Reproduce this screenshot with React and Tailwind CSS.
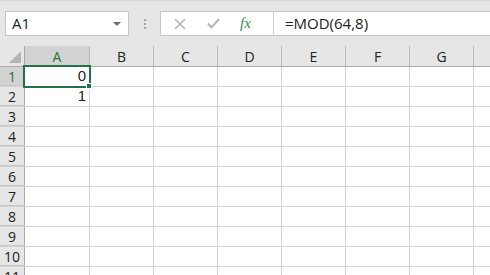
import React from "react";

const cols = ["A", "B", "C", "D", "E", "F", "G", ""];
const rows = [1, 2, 3, 4, 5, 6, 7, 8, 9, 10, 11];

export default function App() {
  return (
    <div className="w-[490px] h-[275px] overflow-hidden bg-white font-['Open_Sans',sans-serif] text-[#222]">
      {/* toolbar */}
      <div className="h-[46px] bg-[#e6e6e6] border-t border-[#d9d9d9] flex items-start pt-[10px]">
        <div className="ml-[5px] w-[124px] h-[25px] bg-white border border-[#c6c6c6] flex items-center justify-between pl-[6px] pr-[7px]">
          <span className="text-[15px] leading-none text-[#222]">A1</span>
          <svg width="8" height="4" viewBox="0 0 8 4"><path d="M0 0h8L4 4z" fill="#707070" /></svg>
        </div>
        <div className="w-[31px] h-[25px] flex flex-col items-center justify-center gap-[2px]">
          <div className="w-[2px] h-[2px] bg-[#a0a0a0]" />
          <div className="w-[2px] h-[2px] bg-[#a0a0a0]" />
          <div className="w-[2px] h-[2px] bg-[#a0a0a0]" />
        </div>
        <div className="flex-1 h-[25px] bg-white border-y border-l border-[#c6c6c6] flex">
          <div className="w-[112px] flex items-center">
            <svg className="ml-[13px]" width="12" height="12" viewBox="0 0 12 12">
              <path d="M1 1L11 11M11 1L1 11" stroke="#b5b5b5" strokeWidth="1.6" />
            </svg>
            <svg className="ml-[21px]" width="13" height="11" viewBox="0 0 13 11">
              <path d="M1 5.5L4.5 9.5L12 1" stroke="#b5b5b5" strokeWidth="2" fill="none" />
            </svg>
            <span className="ml-[20px] font-['Liberation_Serif',serif] italic text-[15px] leading-none text-[#3a8a5c]">fx</span>
          </div>
          <div className="flex-1 border-l border-[#d4d4d4] flex items-center pl-[11px]">
            <span className="text-[15px] leading-none text-[#222]">=MOD(64,8)</span>
          </div>
        </div>
      </div>
      {/* grid */}
      <div className="relative">
        <div className="flex h-[21px] bg-[#e6e6e6] border-b border-[#ababab]">
          <div className="w-[25px] shrink-0 border-r border-[#ababab] flex items-end justify-end pr-[3px] pb-[3px]">
            <svg width="12" height="12" viewBox="0 0 12 12"><path d="M12 0V12H0z" fill="#b4b4b4" /></svg>
          </div>
          {cols.map((c, i) => (
            <div
              key={i}
              className={`${i === 0 ? "w-[65px] bg-[#d2d2d2] text-[#217346]" : "w-[64px] text-[#222]"} shrink-0 pt-[1px] border-r border-[#bcbcbc] flex items-center justify-center text-[14px]`}
            >
              {c}
            </div>
          ))}
        </div>
        {rows.map((r) => (
          <div key={r} className="flex h-[20px] border-b border-[#d4d4d4]">
            <div
              className={`w-[25px] shrink-0 border-r border-[#ababab] flex items-center justify-center text-[14px] ${r === 1 ? "bg-[#d2d2d2] text-[#217346]" : "bg-[#e6e6e6] text-[#222]"} shadow-[inset_0_-1px_0_#c6c6c6]`}
            >
              {r}
            </div>
            {cols.map((c, i) => (
              <div
                key={i}
                className={`${i === 0 ? "w-[65px]" : "w-[64px]"} shrink-0 border-r border-[#d4d4d4] flex items-center justify-end pr-[3px] text-[15px] font-['Liberation_Sans',sans-serif]`}
              >
                {i === 0 && r === 1 ? "0" : i === 0 && r === 2 ? "1" : ""}
              </div>
            ))}
          </div>
        ))}
        <div className="absolute left-[23px] top-[19px] w-[68px] h-[23px] border-2 border-[#217346]" />
        <div className="absolute left-[86px] top-[37px] w-[6px] h-[6px] bg-[#217346] border border-white" />
      </div>
    </div>
  );
}
